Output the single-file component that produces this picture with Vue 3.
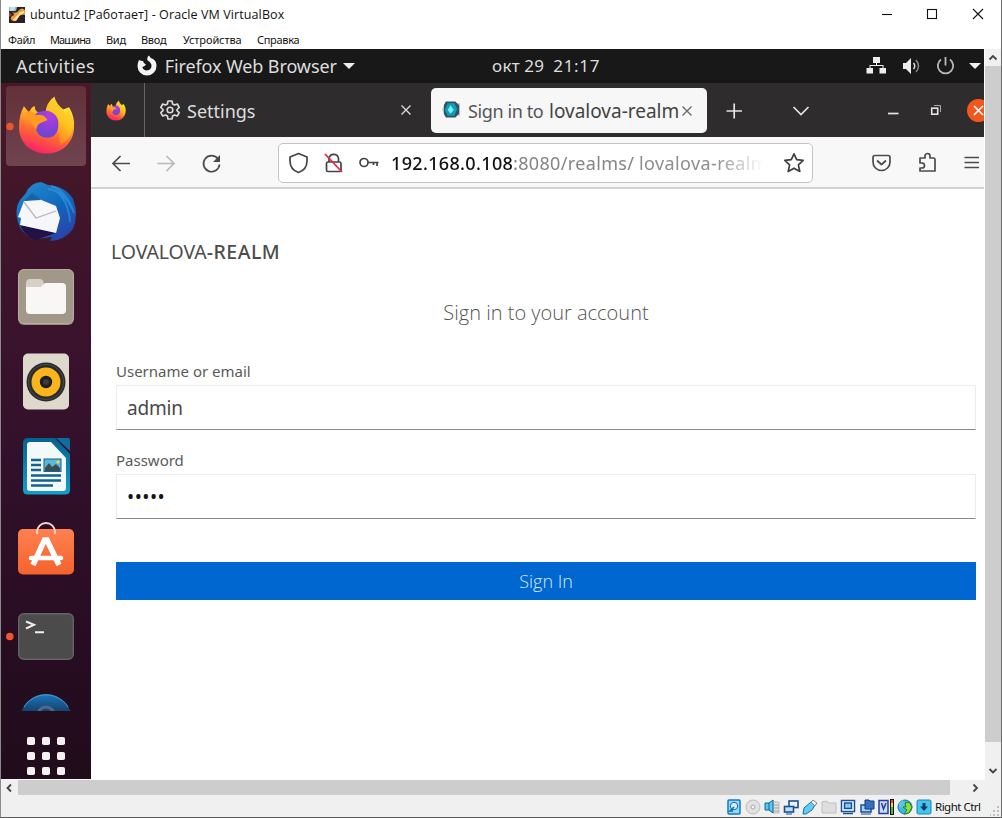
<script setup>
const menu = [
  { label: 'Файл', width: 42 },
  { label: 'Машина', width: 56 },
  { label: 'Вид', width: 35 },
  { label: 'Ввод', width: 42 },
  { label: 'Устройства', width: 74 },
  { label: 'Справка', width: 60 },
]
</script>

<template>
  <div class="window">
    <svg class="defs" width="0" height="0" aria-hidden="true">
      <defs>
        <linearGradient id="ffBody" x1="0.75" y1="0" x2="0.35" y2="1">
          <stop offset="0" stop-color="#ffe83e" />
          <stop offset="0.3" stop-color="#ffb429" />
          <stop offset="0.6" stop-color="#ff6a30" />
          <stop offset="1" stop-color="#fb1f6b" />
        </linearGradient>
        <linearGradient id="ffFlame" x1="0.8" y1="0" x2="0.3" y2="1">
          <stop offset="0" stop-color="#f5e23c" />
          <stop offset="0.5" stop-color="#ffc21e" />
          <stop offset="1" stop-color="#ff6a2f" />
        </linearGradient>
        <radialGradient id="ffGlobe" cx="0.6" cy="0.2" r="0.9">
          <stop offset="0" stop-color="#b53be0" />
          <stop offset="0.5" stop-color="#8b3fd8" />
          <stop offset="1" stop-color="#5b4bd0" />
        </radialGradient>
        <linearGradient id="tbBody" x1="0.2" y1="0" x2="0.8" y2="1">
          <stop offset="0" stop-color="#2288cc" />
          <stop offset="0.5" stop-color="#1068bd" />
          <stop offset="1" stop-color="#2c3fa8" />
        </linearGradient>
        <linearGradient id="swBody" x1="0" y1="0" x2="0" y2="1">
          <stop offset="0" stop-color="#ff8150" />
          <stop offset="1" stop-color="#f4622d" />
        </linearGradient>
        <linearGradient id="wrEdge" x1="0" y1="0" x2="0" y2="1">
          <stop offset="0" stop-color="#05628f" />
          <stop offset="1" stop-color="#12a0cf" />
        </linearGradient>
        <linearGradient id="helpBody" x1="0" y1="0" x2="0" y2="1">
          <stop offset="0" stop-color="#1a78bd" />
          <stop offset="0.33" stop-color="#15426f" />
          <stop offset="1" stop-color="#10263f" />
        </linearGradient>
        <symbol id="firefox" viewBox="0 0 58 60">
          <path d="M6 11 L11 17 Q15 10 17 11 Q17 16 22 18 L30 20 L52 12 Q58 22 57 32 C57 48 45 59 29 59 C13 59 1 48 1 32 Q1 20 6 11Z" fill="url(#ffBody)" />
          <path d="M28 18 Q28 8 37 1 Q39 9 46 14 L49 20 L50 12 Q57 22 56 33 Q54 45 43 50 L39 20Z" fill="url(#ffFlame)" />
          <path d="M17 22 Q17 17 24 16 Q32 14 37 19 Q42 23 41 31 Q40 43 29 43 Q19 42 18 32Z" fill="url(#ffGlobe)" />
          <path d="M8 17 Q14 14 18 20 Q26 18 30 25 L23 28 Q19 30 19 34 Q10 27 8 17Z" fill="#ff9a22" />
        </symbol>
      </defs>
    </svg>

    <header class="titlebar">
      <svg class="app-icon" viewBox="0 0 16 16">
        <rect width="16" height="16" fill="#26222b" />
        <path d="M3 5 Q8 7 10 3 Q13 0 16 3 L16 8 Q11 7 9 11 Q7 15 4 14 Q0 12 3 9 Q7 8 3 5Z" fill="#ee9b35" />
        <path d="M11 5 L15 4 L15 6 L11 8 L7 14 L4 13Z" fill="#ffe0a0" />
        <path d="M0 0H8L7 4H0Z" fill="#8abfd0" />
        <path d="M1 1H6M1 3H5" stroke="#fff" />
        <path d="M0 5 L3 8 L0 10Z" fill="#b03a25" />
      </svg>
      <span class="title">ubuntu2 [Работает] - Oracle VM VirtualBox</span>
      <svg class="win-buttons" viewBox="0 0 112 20">
        <path d="M2 10.500H12" />
        <rect x="47.500" y="5.500" width="9" height="9" />
        <path d="M93 5L103 15M103 5L93 15" />
      </svg>
    </header>

    <nav class="menubar">
      <span v-for="m in menu" :key="m.label" :style="{ width: m.width + 'px' }">{{ m.label }}</span>
    </nav>

    <div class="viewport">
      <div class="guest">
        <div class="topbar">
          <span class="activities">Activities</span>
          <svg class="ff-mono" viewBox="0 0 22 22">
            <path d="M3 5 Q1.500 8 1.500 11 A9.500 9.500 0 0 0 20.500 11 Q20.500 6 17 4 Q14 3 13 0.500 Q10.500 2.500 11.500 5.500 Q15.500 7.500 15.500 11 A4.700 4.700 0 0 1 6.300 12 Q8.500 11.500 10 9.500 Q7.500 8.500 7 6 Q5 6 3 5Z" fill="#f4f4f4" />
          </svg>
          <span class="appname">Firefox Web Browser</span>
          <svg class="caret" viewBox="0 0 12 6"><path d="M0 0H12L6 6Z" fill="#eee" /></svg>
          <span class="clock"><span>окт 29</span><span class="time">21:17</span></span>
          <svg class="sys" viewBox="0 0 118 24">
            <g fill="#eeeeee">
              <rect x="7" y="3" width="7" height="6" /><rect x="0.500" y="14" width="6.500" height="5.500" /><rect x="13.500" y="14" width="6.500" height="5.500" />
              <path d="M10 8H11V11H17.500V15H16.500V12H4.500V15H3.500V11H10Z" />
              <path d="M37 9H40L45 4V20L40 15H37Z" />
              <path d="M103 9H115L109 15Z" />
            </g>
            <path d="M47.500 9Q50 12 47.500 15" fill="none" stroke="#ddd" stroke-width="1.500" />
            <path d="M50 6Q55 12 50 18" fill="none" stroke="#888" stroke-width="1.500" />
            <path d="M75 5.500A7.700 7.700 0 1 0 84 5.500M79.500 3V11.500" fill="none" stroke="#b8b8b8" stroke-width="1.800" />
          </svg>
        </div>

        <div class="desktop">
          <aside class="dock">
            <div class="launchers">
              <svg class="tile active" viewBox="0 0 80 80"><use href="#firefox" x="12" y="9" width="57" height="60" /><circle cx="4" cy="40.500" r="3.700" fill="#f0542a" /></svg>
              <svg class="tile" viewBox="0 0 80 80">
                <path d="M20 22 Q24 12 35 11 L42 14 Q59 15 67 28 Q73 43 67 58 Q58 70 44 70 L46 66 L30 68 Q16 65 12 51 Q8 38 14 29Z" fill="url(#tbBody)" />
                <path d="M42 18Q58 20 66 38M50 20Q63 31 64 51M45 15Q61 20 68 42" fill="none" stroke="#3aa3e8" stroke-width="2" opacity="0.500" />
                <path d="M14 54 L50 62 L38 66 L30 69 Q18 65 14 54Z" fill="#211145" />
                <path d="M18 30 L33 28 L50 35 L54 47 L50 62 L14 54 L15 47 L12 46Z" fill="#f7f7f9" />
                <path d="M18 31L30 47L50 40" fill="none" stroke="#b3b6bd" stroke-width="1.300" />
                <path d="M18 30L26 22L35 29Z" fill="#1764a5" />
              </svg>
              <svg class="tile" viewBox="0 0 80 80">
                <rect x="12" y="13" width="56" height="56" rx="6" fill="#9a8f7f" />
                <rect x="12.500" y="13.500" width="55" height="54" rx="6" fill="#a29889" stroke="#b7ae9f" />
                <path d="M20 28Q20 23 24 23H34Q37 23 38 28V38H20Z" fill="#d8d0c5" />
                <path d="M20 31H35L39 27H56Q60 27 60 31V54Q60 58 56 58H24Q20 58 20 54Z" fill="#f8f7f5" />
              </svg>
              <svg class="tile" viewBox="0 0 80 80">
                <rect x="17" y="12.500" width="46" height="56" rx="5" fill="#dfd8cd" />
                <circle cx="40" cy="41" r="19.500" fill="#292b2e" />
                <circle cx="40" cy="41" r="17.500" fill="none" stroke="#4c4c4a" />
                <circle cx="40" cy="41" r="14.500" fill="#f9b51b" />
                <circle cx="40" cy="41" r="6.200" fill="#1d1f24" />
                <circle cx="40" cy="41" r="3" fill="#3a3c40" />
              </svg>
              <svg class="tile" viewBox="0 0 80 80">
                <path d="M22 12H49L64 28V64Q64 68.500 59 68.500H22Q17 68.500 17 64V17Q17 12 22 12Z" fill="url(#wrEdge)" />
                <path d="M50 12H62Q64 12 64 14V25Z" fill="#0d6d9e" />
                <path d="M24 16H45L60 32V62Q60 65 57 65H24Q21 65 21 62V19Q21 16 24 16Z" fill="#f3f8fa" />
                <path d="M25 34H35M25 39H35M25 44H35M25 49.500H55M25 54.500H55M25 59.500H47" stroke="#15628b" stroke-width="2.300" />
                <rect x="38" y="33" width="17" height="12.500" fill="#56b9de" stroke="#17638a" />
                <path d="M39 45V42L43 37L46 41L50 38L54 42V45Z" fill="#3d4c50" />
                <circle cx="52" cy="36" r="1.700" fill="#f4d23c" />
              </svg>
              <svg class="tile" viewBox="0 0 80 80">
                <rect x="12" y="18" width="56" height="45.500" rx="5" fill="url(#swBody)" />
                <path d="M31 23V21A9 9 0 0 1 49 21V23" fill="none" stroke="#f7d3c2" stroke-width="2" />
                <path d="M27 54L38.500 29H41L53 54" fill="none" stroke="#fff" stroke-width="5.500" />
                <path d="M25 47H55" stroke="#fff" stroke-width="4.500" stroke-linecap="round" />
              </svg>
              <svg class="tile" viewBox="0 0 80 80">
                <rect x="12.700" y="17.700" width="54.600" height="45.600" rx="5" fill="#4b4b4b" stroke="#656463" stroke-width="1.400" />
                <path d="M20 25.500L28 28.800L20 32.500" fill="none" stroke="#eee" stroke-width="2" />
                <path d="M29 36.300H38" stroke="#eee" stroke-width="2" />
                <circle cx="3.800" cy="40.500" r="3.800" fill="#f0542a" />
              </svg>
              <svg class="tile" viewBox="0 0 80 80">
                <circle cx="40" cy="39" r="26" fill="url(#helpBody)" />
                <path d="M18 26A26 26 0 0 1 62 26" fill="none" stroke="#4f96c9" stroke-width="1" />
                <circle cx="40" cy="34" r="8" fill="none" stroke="#536887" stroke-width="3" />
              </svg>
            </div>
            <svg class="app-grid" viewBox="0 0 39 39">
              <g fill="#f3f0f2">
                <template v-for="r in 3" :key="r">
                  <rect v-for="c in 3" :key="c" :x="(c - 1) * 15" :y="(r - 1) * 15" width="8" height="8" rx="1.800" />
                </template>
              </g>
            </svg>
          </aside>

          <main class="browser">
            <div class="tabs">
              <div class="pinned"><svg viewBox="0 0 58 60"><use href="#firefox" width="58" height="60" /></svg></div>
              <div class="tab">
                <svg class="gear" viewBox="0 0 20 20">
                  <path d="M8 1H12L12.600 4L14.500 5L17.300 4L19.200 7.500L17 9.500V10.700L19.200 12.700L17.300 16L14.500 15L12.600 16L12 19H8L7.400 16L5.500 15L2.700 16L0.800 12.700L3 10.700V9.500L0.800 7.500L2.700 4L5.500 5L7.400 4Z" />
                  <circle cx="10" cy="10" r="2.800" />
                </svg>
                <span class="tab-label settings">Settings</span>
                <svg class="close" viewBox="0 0 10 10"><path d="M.5.5L9.500 9.500M9.500.5L.5 9.500" /></svg>
              </div>
              <div class="tab current">
                <svg class="keycloak" viewBox="0 0 20 18">
                  <path d="M3 2H19V15H3L0 9Z" fill="#c3cbcf" />
                  <path d="M4 0H14L18 4V13L14 17H4L2 13V4Z" fill="#31535e" />
                  <path d="M6 2H13L16 8L13 15H6L3 9Z" fill="#0c9fba" />
                  <path d="M9 4L12.500 9L9 13L6 9Z" fill="#7deaf4" />
                </svg>
                <span class="tab-label sign">Sign in to</span>
                <span class="tab-label realm">lovalova-realm</span>
                <svg class="close" viewBox="0 0 10 10"><path d="M.5.5L9.500 9.500M9.500.5L.5 9.500" /></svg>
              </div>
              <svg class="tab-tools" viewBox="0 0 277 54">
                <g fill="none" stroke="#e5e4e4" stroke-width="1.700">
                  <path d="M19.500 28H35M27.200 20.500V35.500" />
                  <path d="M86.500 24L94 31.500L101.500 24" />
                  <path d="M181 30.500H191.500" stroke-width="1.700" />
                  <rect x="224.700" y="25.200" width="6" height="6" stroke-width="1.600" />
                  <path d="M227 22.500H233.500V29" stroke="#aaa" stroke-width="1" />
                </g>
                <circle cx="271.500" cy="27.500" r="11.500" fill="#f4571d" />
                <path d="M267 23L276 32M276 23L267 32" stroke="#fff" stroke-width="1.700" />
              </svg>
            </div>

            <div class="toolbar">
              <svg class="nav-icons" viewBox="0 0 120 24">
                <g fill="none" stroke-width="1.700" stroke="#4b4b4d">
                  <path d="M19 12.500H2M9.500 5L2 12.500L9.500 20" />
                  <path d="M46.500 12.500H63M55.500 5L63 12.500L55.500 20" stroke="#b9b9ba" />
                  <path d="M107 8A8 8 0 1 0 108.500 13.500" />
                </g>
                <path d="M109 4V11H102Z" fill="#4b4b4d" />
              </svg>
              <div class="urlbar">
                <svg class="url-icons" viewBox="0 0 90 22">
                  <g fill="none" stroke="#444446" stroke-width="1.700">
                    <path d="M9.500 1.500L18 5V9Q18 17.500 9.500 20.500Q1 17.500 1 9V5Z" stroke-linejoin="round" />
                    <path d="M40 10V6.500A4.800 4.800 0 0 1 49.500 6.500V10" />
                    <rect x="37.500" y="10" width="14.500" height="9.500" rx="1.500" />
                    <circle cx="75" cy="10.500" r="4" />
                    <path d="M79 10.500H89.500M88 10.500V14M84.500 10.500V13" />
                  </g>
                  <path d="M36 2L53 20" stroke="#e22850" stroke-width="1.800" />
                </svg>
                <span class="url"><span class="host">192.168.0.108</span><span class="path">:8080/realms/</span><span class="tail">lovalova-realm</span></span>
                <svg class="star" viewBox="0 0 22 22"><path d="M11 1.800L13.700 7.700L20.200 8.400L15.400 12.800L16.800 19.500L11 16.200L5.200 19.500L6.600 12.800L1.800 8.400L8.300 7.700Z" fill="none" stroke="#3f3f41" stroke-width="1.700" stroke-linejoin="round" /></svg>
              </div>
              <svg class="right-icons" viewBox="0 0 110 24">
                <g fill="none" stroke="#4b4b4d" stroke-width="1.700" stroke-linejoin="round">
                  <path d="M3 4.500H16Q18 4.500 18 6.500V11A8.500 8.500 0 0 1 1 11V6.500Q1 4.500 3 4.500Z" />
                  <path d="M5 9.500L9.500 13.500L14 9.500" />
                  <path d="M48 7H53V5A2.500 2.500 0 0 1 58 5V7H61.500Q63 7 63 8.500V20H48V17H50A2.500 2.500 0 0 0 50 12H48Z" />
                  <path d="M92.500 6.500H107M92.500 11.500H107M92.500 16.500H107" />
                </g>
              </svg>
            </div>

            <section class="page">
              <div class="brand">LOVALOVA<b>-REALM</b></div>
              <h1><span>Sign in to your account</span></h1>
              <form>
                <label><span class="lab user">Username or email</span></label>
                <div class="field"><span class="val">admin</span></div>
                <label><span class="lab pass">Password</span></label>
                <div class="field"><span class="dots">•••••</span></div>
                <div class="submit"><span>Sign In</span></div>
              </form>
            </section>
          </main>
        </div>
      </div>

      <div class="vscroll">
        <svg viewBox="0 0 16 17"><path d="M4.500 10.500L8 7L11.500 10.500" /></svg>
        <div class="vthumb"></div>
        <svg viewBox="0 0 16 17"><path d="M4.500 7L8 10.500L11.500 7" /></svg>
      </div>
    </div>

    <div class="hscroll">
      <svg viewBox="0 0 17 16"><path d="M10 4.500L6.500 8L10 11.500" /></svg>
      <div class="hthumb"></div>
      <svg viewBox="0 0 17 16"><path d="M6.500 4.500L10 8L6.500 11.500" /></svg>
    </div>

    <footer class="status">
      <svg viewBox="0 0 16 16"><rect x="2" y="1" width="12" height="14" rx="1" fill="#8fdcf8" stroke="#1478c4" stroke-width="1.500" /><circle cx="8" cy="7" r="3.700" fill="#d5f2fc" stroke="#1466b4" /><path d="M8 8L4 12H7" stroke="#1466b4" fill="none" stroke-width="1.500" /></svg>
      <svg viewBox="0 0 16 16"><circle cx="8" cy="8" r="7" fill="#e1e1e1" stroke="#bcbcbc" /><circle cx="8" cy="8" r="2" fill="#f5f5f5" stroke="#aaa" /></svg>
      <svg viewBox="0 0 16 16"><path d="M9 3H15V14H9Z" fill="#ddd" stroke="#bbb" /><path d="M10 6H15M10 9H15M10 12H15" stroke="#aaa" /><path d="M1 4H5L9 1V14L5 11H1Z" fill="#55cbee" stroke="#14629a" /><path d="M5 4V11" stroke="#14629a" /></svg>
      <svg viewBox="0 0 16 16"><rect x="6" y="2" width="9" height="6.500" fill="#e8f5ff" stroke="#1b4f95" stroke-width="1.600" /><rect x="1.500" y="7.500" width="9" height="5.500" fill="#bce2fa" stroke="#1b4f95" stroke-width="1.600" /><path d="M3 15H9" stroke="#1b4f95" /></svg>
      <svg viewBox="0 0 16 16"><path d="M1 15L2 9L9 3L13 6L10 11L4 15Z" fill="#5ccff2" stroke="#1871a5" /><path d="M9 3L11 1L15 4L13 7Z" fill="#eee" stroke="#888" /></svg>
      <svg viewBox="0 0 16 16"><path d="M1 14V3L6 2L7 4H15V14Z" fill="#dedede" stroke="#bfbfbf" /></svg>
      <svg viewBox="0 0 16 16"><rect x="1.500" y="1.500" width="13" height="11" fill="#fff" stroke="#1b4f95" stroke-width="1.500" /><rect x="4.500" y="4" width="7" height="5.500" fill="#7dcdf2" stroke="#1b4f95" stroke-width="1.500" /><path d="M3 14.500H13" stroke="#1b4f95" stroke-width="1.500" /></svg>
      <svg viewBox="0 0 16 16"><rect x="2" y="6" width="10" height="7" fill="#9ed6f2" stroke="#1b4f95" stroke-width="1.500" /><path d="M6 1H10L11 2H15V10H6Z" fill="#376fc4" stroke="#163b81" /><path d="M2 15H12" stroke="#1b4f95" /></svg>
      <svg viewBox="0 0 16 16"><rect x="1" y="1.500" width="9" height="13" fill="#c9dcfb" stroke="#263da0" stroke-width="1.500" /><path d="M3.500 4L5.500 10L8 4" fill="none" stroke="#263da0" stroke-width="1.500" /><rect x="12.500" y="0.500" width="3" height="15" fill="#f2d52e" stroke="#111" /><path d="M14 8V15" stroke="#53b53e" stroke-width="2" /><path d="M14 1V4" stroke="#e85032" stroke-width="2" /></svg>
      <svg viewBox="0 0 16 16"><circle cx="8" cy="8" r="7" fill="#38b8e9" stroke="#1874a6" /><path d="M2 4L6 1L8 5L5 9L2 8Z" fill="#5cc8e0" /><path d="M8 4L12 3L15 8L12 14L7 15L10 11L6 8L9 8Z" fill="#8ade3f" stroke="#2c7c2c" /></svg>
      <svg viewBox="0 0 16 16"><rect x="1" y="1" width="14" height="14" rx="1.500" fill="#43c5ee" stroke="#1684b8" /><path d="M6.500 4H9.500V7.500H12L8 12L4 7.500H6.500Z" fill="#133b70" /></svg>
      <span class="hostkey">Right Ctrl</span>
      <svg class="grip" viewBox="0 0 10 10"><path d="M7 0H9V2H7ZM7 4H9V6H7ZM3 4H5V6H3ZM7 8H9V10H7ZM3 8H5V10H3ZM0 8H1V10H0Z" fill="#bfbfbf" /></svg>
    </footer>
  </div>
</template>

<style>
body { margin: 0; background: #fff; }
</style>

<style scoped>
* { box-sizing: border-box; }
svg { display: block; flex: none; }
span { white-space: nowrap; }
.defs { position: absolute; }
.window {
  width: 1002px; height: 818px; overflow: hidden; display: flex; flex-direction: column;
  background: #fff; border-left: 1px solid #8a8a8a; border-right: 1px solid #6d6d6d; border-bottom: 1px solid #595959;
  font-family: "Noto Sans", "Open Sans", sans-serif;
}
.titlebar { height: 31px; flex: none; display: flex; align-items: center; padding-left: 8px; }
.app-icon { width: 16px; height: 16px; margin-top: -2px; }
.title { font: 12.5px/16px "Open Sans", sans-serif; color: #111; margin: -1px 0 0 5px; letter-spacing: 0.1px; flex: 1; }
.win-buttons { width: 112px; height: 20px; margin: -3px 9px 0 0; fill: none; stroke: #111; stroke-width: 1.100; }
.menubar { height: 18px; flex: none; display: flex; padding-left: 7px; font: 11px/18px "Noto Sans", sans-serif; color: #111; letter-spacing: -0.3px; }
.menubar span { flex: none; }
.menubar span:nth-child(2) { letter-spacing: -0.9px; }
.menubar span:nth-child(5) { letter-spacing: -0.1px; }
.viewport { height: 731px; flex: none; display: flex; background: #fff; }
.guest { width: 983px; height: 730px; overflow: hidden; display: flex; flex-direction: column; }
.topbar { height: 34px; flex: none; background: #181818; display: flex; align-items: center; color: #dedede; font-size: 18px; line-height: 34px; padding-left: 15px; }
.activities { width: 120px; letter-spacing: 0.4px; }
.ff-mono { width: 22px; height: 22px; margin-top: -1px; }
.appname { width: 178px; margin-left: 7px; letter-spacing: -0.1px; }
.caret { width: 12px; height: 6px; margin: -1px 0 0 1px; }
.clock { display: flex; gap: 9px; margin-left: 137px; width: 374px; font-size: 17px; letter-spacing: 0.2px; }
.time { letter-spacing: 0.7px; }
.sys { width: 118px; height: 24px; margin-left: 1px; }
.desktop { flex: 1; display: flex; min-height: 0; }
.dock { width: 90px; flex: none; background: linear-gradient(#4a1727 0, #42162a 110px, #3c132d 220px, #32102b 380px, #270d22 560px, #200c1b); display: flex; flex-direction: column; }
.launchers { height: 628px; overflow: hidden; padding: 3px 0 0 5px; display: flex; flex-direction: column; gap: 5px; }
.tile { width: 80px; height: 80px; border-radius: 4px; }
.tile.active { background: linear-gradient(#623139, #6f444f); }
.app-grid { width: 39px; height: 39px; margin: 26px 0 0 26px; }
.browser { flex: 1; min-width: 0; display: flex; flex-direction: column; background: #fff; }
.tabs { height: 54px; flex: none; display: flex; background: #2e2c2d; }
.pinned { width: 54px; border-right: 1px solid #686667; padding: 17px 0 0 15px; }
.pinned svg { width: 20px; height: 21px; }
.tab { width: 286px; display: flex; align-items: center; padding: 0 20px 0 15px; }
.gear { width: 20px; height: 20px; fill: none; stroke: #ddd; stroke-width: 1.600; stroke-linejoin: round; }
.close { width: 10px; height: 10px; margin-left: auto; stroke: #dadada; stroke-width: 1.400; }
.tab-label { font-size: 18px; line-height: 28px; margin-top: 2px; }
.settings { color: #dedede; margin-left: 7px; }
.tab.current { width: 276px; height: 45px; margin-top: 5px; background: #f7f7f7; border-radius: 5px; padding: 0 15px 0 11px; }
.keycloak { width: 19px; height: 18px; margin-top: -1px; }
.current .close { stroke: #6b6b6b; }
.sign { color: #555558; margin-left: 7px; width: 77px; letter-spacing: -0.4px; margin-top: 1px; }
.realm { color: #434343; margin-left: 4px; font-size: 19px; width: 130px; letter-spacing: 0; margin-top: 1px; }
.tab-tools { width: 277px; height: 54px; }
.toolbar { height: 52px; flex: none; display: flex; align-items: center; background: #f8f8f8; border-bottom: 2px solid #d2d2d2; padding-left: 19.500px; }
.nav-icons { width: 120px; height: 24px; margin-top: 2px; }
.urlbar { width: 535px; height: 40px; margin-left: 47.500px; margin-top: 1px; display: flex; align-items: center; background: #fff; border: 1.500px solid #c4c4c4; border-radius: 5px; padding-left: 10px; }
.url-icons { width: 90px; height: 22px; }
.url { display: flex; width: 380px; overflow: hidden; margin-left: 12px; margin-top: 1px; font-size: 18px; line-height: 30px; -webkit-mask-image: linear-gradient(90deg, #000 325px, transparent 372px); mask-image: linear-gradient(90deg, #000 325px, transparent 372px); }
.host { color: #111; width: 122px; font-weight: 500; letter-spacing: 0.35px; }
.path { color: #858585; width: 126px; letter-spacing: 0.35px; }
.tail { color: #8d8d8d; letter-spacing: 0.4px; }
.star { width: 22px; height: 22px; margin-left: 11.500px; }
.right-icons { width: 110px; height: 24px; margin-left: 58.500px; margin-top: 1px; }
.page { flex: 1; padding: 0 8px 0 25px; display: flex; flex-direction: column; }
.brand { margin: 49px 0 0 -5px; height: 28px; font-size: 19.5px; line-height: 28px; color: #4c4c4c; letter-spacing: -0.1px; }
.brand b { font-weight: 500; letter-spacing: 0.5px; }
h1 { margin: 34px 0 0; height: 26px; text-align: center; font: 300 20px/26px "Open Sans", sans-serif; color: #555; }
form { display: flex; flex-direction: column; margin-top: 35px; }
label { height: 24px; font: 15px/20px "Noto Sans", sans-serif; color: #5a5a5a; }
.field { height: 45px; margin-bottom: 20px; border: 1px solid #ececec; border-bottom: 1.500px solid #898989; display: flex; align-items: center; padding-left: 10px; font-size: 19px; color: #484848; }
.submit { height: 38px; margin-top: 23px; background: #0066d0; color: #d5ebfb; text-align: center; font: 300 18px/38px "Open Sans", sans-serif; }
.val { letter-spacing: -0.2px; }
.dots { color: #151515; letter-spacing: 0.5px; }
.vscroll { width: 16px; height: 731px; margin-left: 1px; background: #f0f0f0; display: flex; flex-direction: column; }
.vscroll svg { width: 16px; height: 17px; }
.vthumb { height: 676px; background: #cdcdcd; margin-bottom: 20px; }
.hscroll { height: 16px; flex: none; background: #f0f0f0; display: flex; }
.hscroll svg { width: 17px; height: 16px; }
.hthumb { width: 932px; height: 15px; background: #cdcdcd; margin-right: 17px; }
.vscroll svg, .hscroll svg { fill: none; stroke: #444; stroke-width: 1.800; }
.status { flex: 1; background: #f0f0f0; display: flex; align-items: center; gap: 3px; padding-left: 725px; }
.status svg { width: 16px; height: 16px; }
.hostkey { font-size: 11.500px; line-height: 16px; color: #111; width: 52px; letter-spacing: -0.500px; }
.status .grip { width: 10px; height: 10px; margin-top: 8px; }
</style>
